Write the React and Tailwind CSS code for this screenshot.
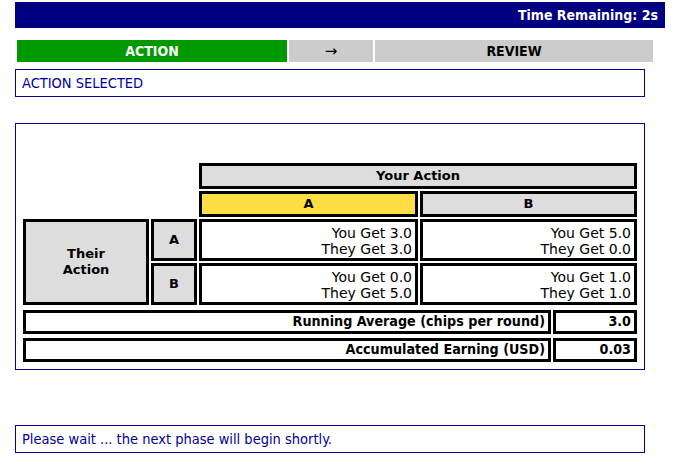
import React from 'react';

const tahoma = { fontFamily: '"DejaVu Sans Condensed", "DejaVu Sans", sans-serif' };

function Cell({ children, className = '' }) {
  return (
    <div className={`border-[3px] border-black flex items-center ${className}`}>
      {children}
    </div>
  );
}

function Payoff({ you, they }) {
  return (
    <Cell className="bg-white justify-end pr-[3px] pt-[1px] text-[14px] leading-[16px] text-black">
      <div className="text-right">
        <div>You Get {you}</div>
        <div>They Get {they}</div>
      </div>
    </Cell>
  );
}

export default function App() {
  return (
    <div className="bg-white w-[678px] h-[468px] pt-[2px] font-['DejaVu_Sans',sans-serif]">
      <div
        className="ml-[15px] w-[650px] h-[26px] bg-[#000080] text-white font-bold text-[14px] flex items-center justify-end pr-[7px]"
        style={tahoma}
      >
        Time Remaining: 2s
      </div>

      <div className="ml-[17px] mt-[12px] w-[636px] h-[22px] flex gap-[2px] font-bold text-[14px]" style={tahoma}>
        <div className="w-[270px] bg-[#009900] text-white flex items-center justify-center">ACTION</div>
        <div className="w-[84px] bg-[#cccccc] text-black flex items-center justify-center font-normal font-['DejaVu_Sans',sans-serif] text-[15px]">
          →
        </div>
        <div className="flex-1 bg-[#cccccc] text-black flex items-center justify-center">REVIEW</div>
      </div>

      <div
        className="ml-[15px] mt-[7px] w-[630px] h-[28px] border border-[#000099] text-[#000099] text-[14.5px] flex items-center pl-[6px] pt-[2px]"
        style={tahoma}
      >
        ACTION SELECTED
      </div>

      <div className="ml-[15px] mt-[26px] w-[630px] border border-[#000099] px-[7px] pt-[39px] pb-[7px]">
        <div className="grid grid-cols-[126px_46px_219px_217px] grid-rows-[26px_26px_42px_42px] gap-[2px] text-[13px] text-black">
          <div className="col-start-3 col-span-2">
            <Cell className="h-full bg-[#dddddd] justify-center font-bold">Your Action</Cell>
          </div>
          <Cell className="col-start-3 bg-[#ffdd44] justify-center font-bold">A</Cell>
          <Cell className="bg-[#dddddd] justify-center font-bold">B</Cell>

          <Cell className="row-span-2 bg-[#dddddd] justify-center font-bold text-center leading-[16px]">
            Their
            <br />
            Action
          </Cell>
          <Cell className="bg-[#dddddd] justify-center font-bold">A</Cell>
          <Payoff you="3.0" they="3.0" />
          <Payoff you="5.0" they="0.0" />

          <Cell className="bg-[#dddddd] justify-center font-bold">B</Cell>
          <Payoff you="0.0" they="5.0" />
          <Payoff you="1.0" they="1.0" />
        </div>

        <div
          className="mt-[5px] grid grid-cols-[528px_84px] auto-rows-[24px] gap-x-[2px] gap-y-[4px] text-[14.2px] font-bold text-black"
          style={tahoma}
        >
          <Cell className="justify-end pr-[3px]">Running Average (chips per round)</Cell>
          <Cell className="justify-end pr-[3px]">3.0</Cell>
          <Cell className="justify-end pr-[3px]">Accumulated Earning (USD)</Cell>
          <Cell className="justify-end pr-[3px]">0.03</Cell>
        </div>
      </div>

      <div
        className="ml-[15px] mt-[55px] w-[630px] h-[28px] border border-[#000099] text-[#000099] text-[14.5px] flex items-center pl-[6px] pt-[2px]"
        style={tahoma}
      >
        Please wait ... the next phase will begin shortly.
      </div>
    </div>
  );
}
